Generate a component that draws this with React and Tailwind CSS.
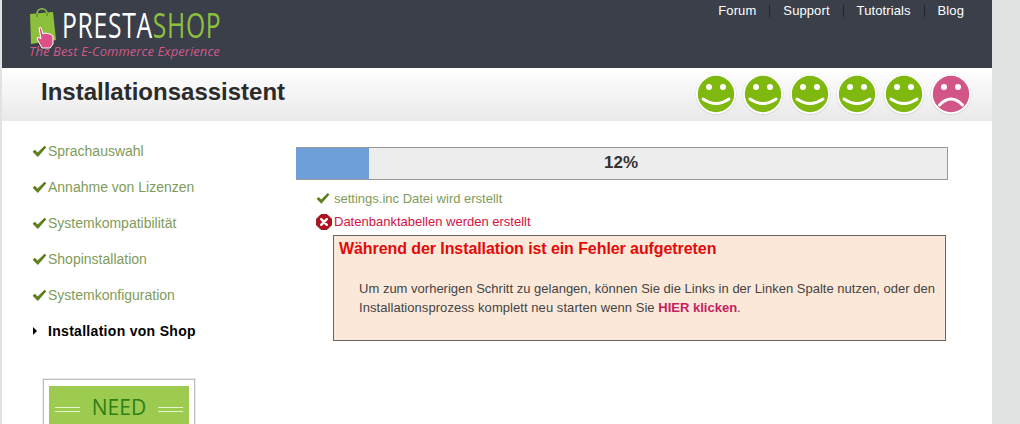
const font = { fontFamily: '"Liberation Sans", Arial, sans-serif' };

function Check({ className = "" }) {
  return (
    <svg viewBox="0 0 16 14" className={className} aria-hidden="true">
      <path d="M0.6 7.4 L3 5.2 L6 8 L13.4 0.8 L15.4 2.4 L6.2 13 Z" fill="#5f7f1c" />
    </svg>
  );
}

function Smiley({ sad }) {
  return (
    <svg viewBox="0 0 42 42" className="w-[42px] h-[42px] shrink-0" aria-hidden="true">
      <circle cx="21" cy="21.5" r="20.4" fill="#d4d4d4" />
      <circle cx="21" cy="21" r="20" fill="#ffffff" />
      <circle cx="21" cy="21" r="18.2" fill={sad ? "#d15587" : "#7fb80e"} />
      <circle cx="14" cy="14" r="3" fill="#fff" />
      <circle cx="28" cy="14" r="3" fill="#fff" />
      {sad ? (
        <path d="M9.5 32 Q21 20 32.5 32" fill="none" stroke="#fff" strokeWidth="3" strokeLinecap="round" />
      ) : (
        <path d="M8 26 Q21 35 34 26" fill="none" stroke="#fff" strokeWidth="3" strokeLinecap="round" />
      )}
    </svg>
  );
}

function Bag() {
  return (
    <svg viewBox="0 0 30 44" className="w-[30px] h-[44px] shrink-0" aria-hidden="true">
      <path d="M9 8 C9 1 19 1 19 8" fill="none" stroke="#8fc04a" strokeWidth="1.6" />
      <path d="M2 8 L25 6 L28 34 L3 38 Z" fill="#8cc03c" />
      <path d="M9 8 L9 11 M19 7 L19 10" stroke="#5f8a25" strokeWidth="1.4" />
      <path d="M11 22 L13 21.5 L15 28 L17 27 L22 28 L25 30 L25 38 L22 42 L14 42 L9 33 L10 31 L13 33 Z" fill="#dc4f87" stroke="#fff" strokeWidth="1" />
    </svg>
  );
}

const steps = ["Sprachauswahl", "Annahme von Lizenzen", "Systemkompatibilität", "Shopinstallation", "Systemkonfiguration"];
const nav = ["Forum", "Support", "Tutotrials", "Blog"];

export default function App() {
  return (
    <div style={font} className="h-[424px] w-[1020px] overflow-hidden bg-[#e1e2e2] pl-[2px] pr-[28px]">
      <div className="h-full bg-white">
        <header className="h-[68px] bg-[#3a3f4a] flex justify-between pl-[26px] pr-[28px]">
          <div className="flex items-start pt-[6px] relative w-[200px]">
            <Bag />
            <div className="relative h-[36px]">
              <div className="absolute left-[4px] top-[4px] origin-left scale-x-[0.705] whitespace-nowrap text-[35px] leading-[30px] tracking-[1px] font-medium" style={{ fontFamily: '"Open Sans", sans-serif' }}>
                <span className="text-white">PRESTA</span>
                <span className="text-[#8cc03c]">SHOP</span>
              </div>
            </div>
            <div className="absolute left-[1px] top-[43px] whitespace-nowrap text-[13px] leading-[16px] tracking-[0.07px] italic text-[#cf5a8a]" style={{ fontFamily: '"Open Sans", sans-serif' }}>
              The Best E-Commerce Experience
            </div>
          </div>
          <nav className="flex items-start pt-[3px] text-[13px] leading-[16px] tracking-[0.1px] text-white">
            {nav.map((n, i) => (
              <span key={n} className="flex items-center">
                <span>{n}</span>
                {i < nav.length - 1 && <span className="mx-[13px] w-px h-[12px] bg-[#23262d]" />}
              </span>
            ))}
          </nav>
        </header>

        <div className="h-[53px] bg-gradient-to-b from-white to-[#e9e9e9] flex items-center justify-between pl-[38px] pr-[20px]">
          <h1 className="text-[24px] font-bold text-[#2b2b2b] leading-[28px] -mt-[5px] ml-px">Installationsassistent</h1>
          <div className="flex gap-[5px] -mt-[1px]">
            {[0, 1, 2, 3, 4].map((i) => <Smiley key={i} />)}
            <Smiley sad />
          </div>
        </div>

        <div className="flex">
          <aside className="w-[294px] shrink-0 pl-[30px] pt-[12px]">
            <ul>
              {steps.map((s) => (
                <li key={s} className="h-[36px] flex items-center text-[14px] text-[#7f9b5a]">
                  <Check className="w-[15px] h-[13px] mr-[1px]" />
                  <span>{s}</span>
                </li>
              ))}
              <li className="h-[36px] flex items-center text-[14px] font-bold text-black tracking-[0.3px]">
                <span className="ml-[1px] mr-[11px] w-0 h-0 border-y-[4px] border-y-transparent border-l-[4px] border-l-black" />
                <span>Installation von Shop</span>
              </li>
            </ul>
            <div className="ml-[10px] mt-[29px] w-[154px] h-[100px] border-2 border-[#ececec] outline outline-1 -outline-offset-2 outline-[#bdbdbd] px-[5px] pt-[6px]">
              <div className="h-[60px] bg-[#9ccb50] flex items-start justify-center gap-[12px] pt-[8px]">
                <span className="mt-[13px] w-[25px] h-[5px] border-y border-[#e6f1cf]" />
                <span className="text-[21px] leading-[26px] text-[#2e8016]" style={{ fontFamily: '"Open Sans", sans-serif' }}>NEED</span>
                <span className="mt-[13px] w-[25px] h-[5px] border-y border-[#e6f1cf]" />
              </div>
            </div>
          </aside>

          <main className="w-[652px] pt-[26px]">
            <div className="relative h-[33px] bg-[#ededed] border-y border-r border-[#999999] flex items-center justify-center text-[17px] font-bold text-[#333333]">
              <div className="absolute left-0 top-0 bottom-0 w-[73px] bg-[#6f9fd8]" />
              <span className="relative -ml-[1px] -mt-[1px]">12%</span>
            </div>
            <div className="pl-[20px] mt-[7px] text-[13px] leading-[23px]">
              <div className="flex items-center text-[#7f9b5a] h-[23px]">
                <Check className="w-[14px] h-[13px] mr-[4px]" />
                <span>settings.inc Datei wird erstellt</span>
              </div>
              <div className="flex items-center text-[#d4123f] h-[23px]">
                <svg viewBox="0 0 16 16" className="w-[16px] h-[16px] mr-[2px] shrink-0" aria-hidden="true">
                  <path d="M5 0.5 H11 L15.5 5 V11 L11 15.5 H5 L0.5 11 V5 Z" fill="#b3111f" stroke="#7a0a12" strokeWidth="0.8" strokeLinejoin="round" />
                  <path d="M5.2 5.2 L10.8 10.8 M10.8 5.2 L5.2 10.8" stroke="#fff" strokeWidth="2.4" strokeLinecap="round" />
                </svg>
                <span>Datenbanktabellen werden erstellt</span>
              </div>
            </div>
            <div className="ml-[37px] mr-[2px] h-[106px] border border-[#666666] bg-[#fbe8d9] mt-[2px] px-[5px] pt-[3px]">
              <h2 className="text-[16px] leading-[20px] font-bold text-[#e30a0a] tracking-[-0.08px]">Während der Installation ist ein Fehler aufgetreten</h2>
              <p className="mt-[20px] pl-[20px] pr-[5px] text-[13px] leading-[19px] text-[#444444] text-justify">
                Um zum vorherigen Schritt zu gelangen, können Sie die Links in der Linken Spalte nutzen, oder den <span className="tracking-[0.06px]">Installationsprozess komplett neu starten wenn Sie </span><a className="font-bold text-[#c4215f]">HIER klicken</a>.
              </p>
            </div>
          </main>
        </div>
      </div>
    </div>
  );
}
